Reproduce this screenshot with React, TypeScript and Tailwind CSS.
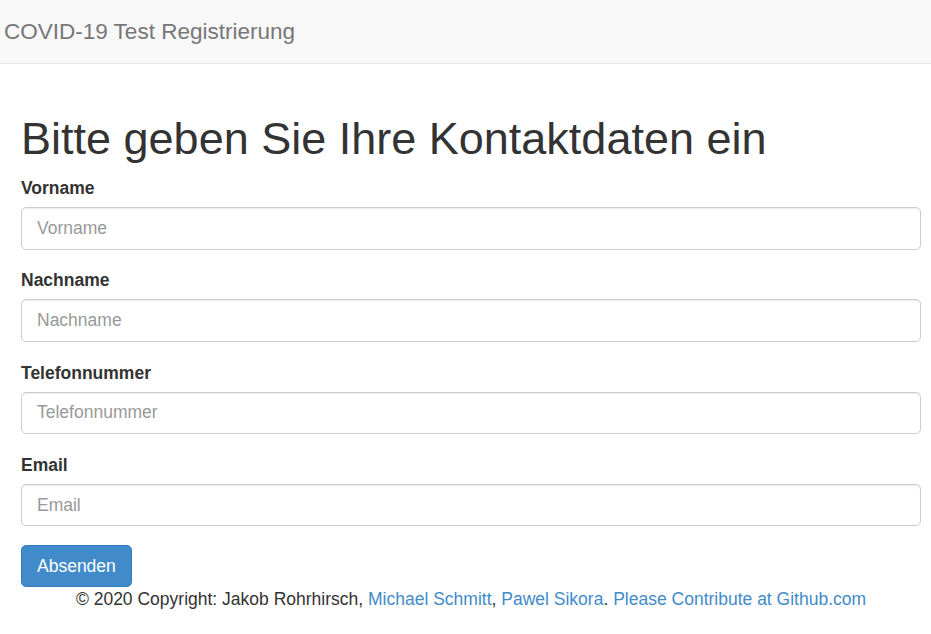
import React from 'react';

const fields = ['Vorname', 'Nachname', 'Telefonnummer', 'Email'];

export default function App() {
  return (
    <div className="min-h-screen bg-white text-[#333] text-[17.5px] leading-[25px] font-['Liberation_Sans',Arial,sans-serif]">
      <nav className="h-[64px] bg-[#f8f8f8] border-b border-[#e7e7e7] flex items-center pl-[4px]">
        <span className="text-[22.5px] text-[#777] leading-[25px]">COVID-19 Test Registrierung</span>
      </nav>
      <div className="pl-[21px] pr-[10px] pt-[50px]">
        <h1 className="text-[45px] leading-[49.5px] mb-[12.5px] font-normal">
          Bitte geben Sie Ihre Kontaktdaten ein
        </h1>
        <form onSubmit={e => e.preventDefault()}>
          {fields.map(f => (
            <div key={f} className="mb-[18.75px]">
              <label className="block font-bold mb-[6px]">{f}</label>
              <input
                type="text"
                placeholder={f}
                className="block w-full h-[42.5px] px-[15px] border border-[#ccc] rounded-[5px] text-[17.5px] text-[#555] placeholder:text-[#999] shadow-[inset_0_1px_1px_rgba(0,0,0,0.075)] outline-none"
              />
            </div>
          ))}
          <button
            type="submit"
            className="h-[42px] px-[15px] bg-[#428bca] border border-[#357ebd] rounded-[5px] text-white text-[17.5px] leading-[25px]"
          >
            Absenden
          </button>
        </form>
        <footer className="text-center">
          © 2020 Copyright: Jakob Rohrhirsch,{' '}
          <a className="text-[#428bca]" href="#">Michael Schmitt</a>,{' '}
          <a className="text-[#428bca]" href="#">Pawel Sikora</a>.{' '}
          <a className="text-[#428bca]" href="#">Please Contribute at Github.com</a>
        </footer>
      </div>
    </div>
  );
}
